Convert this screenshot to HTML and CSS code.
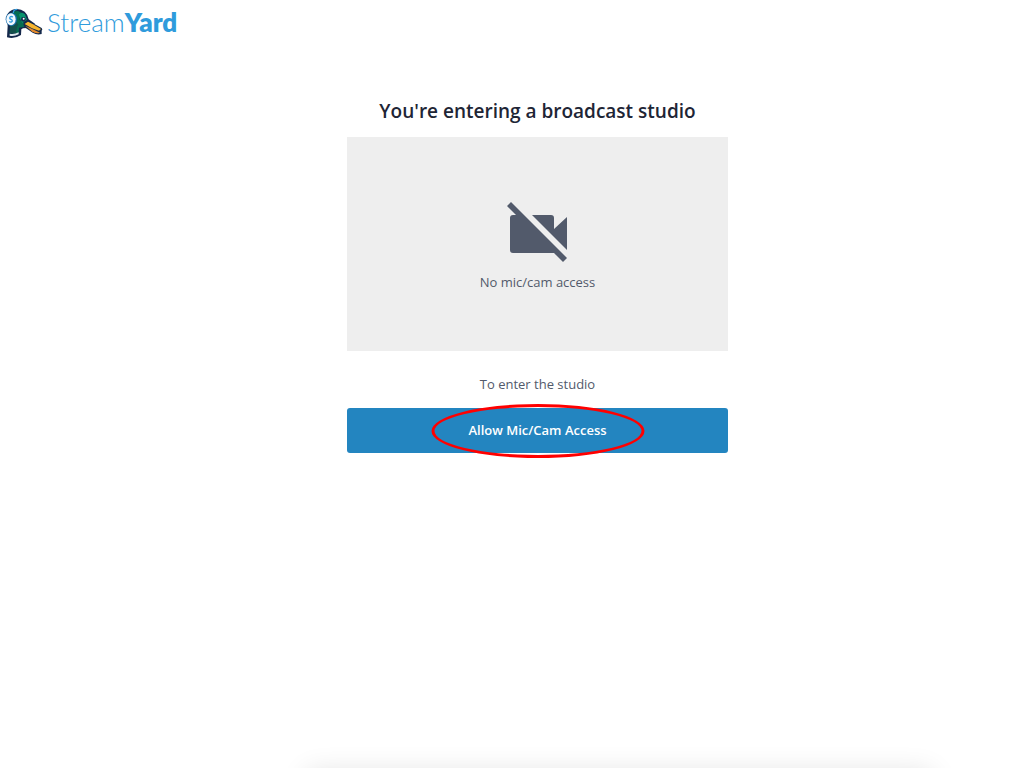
FILE: index.html
```html
<!DOCTYPE html>
<html lang="en">
<head>
    <meta charset="UTF-8">
    <meta name="viewport" content="width=device-width, initial-scale=1.0">
    <title>StreamYard</title>
    <link rel="stylesheet" href="styles.css">
</head>
<body>

<header class="header">
    <a href="#" class="logo">
        <svg class="logo-duck" viewBox="14 23 114 93" aria-hidden="true">
            <!-- head and neck -->
            <path d="M20 111 L22 77 L19 47 Q24 31 44 26 Q61 24 73 34 Q83 43 85 57 L104 70 L83 83 L68 84 L63 87 L62 104 Q43 117 20 111 Z" fill="#14284b"/>
            <path d="M29 76 L47 48 L35 37 Q43 31 53 32 L64 37 Q56 46 58 59 L70 67 L73 79 L56 82 L55 99 L28 99 Z" fill="#056c51"/>
            <path d="M29 77 Q42 80 49 65 L54 73 Q47 82 48 99 L29 99 Z" fill="#14504b"/>
            <path d="M56 42 Q65 32 74 42 L80 58 L66 68 Q57 58 56 42 Z" fill="#08936d"/>
            <!-- collar -->
            <path d="M28 100 Q42 103 55 96 L55 102 Q42 109 28 106 Z" fill="#dfe9ee"/>
            <!-- beak -->
            <path d="M69 72 Q74 65 83 61 L98 69 L124 83 Q128 88 124 91 L124 101 Q110 105 97 97 L72 80 Z" fill="#14284b"/>
            <path d="M73 71 L83 64 L98 72 L122 86 L116 91 L95 84 Z" fill="#f7b52d"/>
            <path d="M75 76 L94 85 L119 97 Q108 102 94 93 Z" fill="#e58b2c"/>
            <!-- eye -->
            <circle cx="69" cy="57" r="7" fill="#14284b"/>
            <circle cx="70" cy="55" r="3" fill="#fff"/>
            <!-- headphone -->
            <path d="M39 38 Q39 27 51 27" fill="none" stroke="#2f9de0" stroke-width="4"/>
            <ellipse cx="33" cy="57" rx="17" ry="20" fill="#176cac"/>
            <ellipse cx="32" cy="57" rx="14" ry="18" fill="#f2f9ff"/>
            <path d="M38 50 Q29 46 28 53 Q29 57 34 58 Q38 63 33 65 Q29 66 27 63" fill="none" stroke="#2f9de0" stroke-width="4"/>
        </svg>
        <span class="logo-text">Stream<b>Yard</b></span>
    </a>
</header>

<main class="studio">
    <div class="entry">
        <h1>You're entering a broadcast studio</h1>

        <!-- Camera preview -->
        <div class="preview">
            <svg class="camera-off" viewBox="0 0 62 60" aria-hidden="true">
                <path d="M4 0 L60 56 L56 60 L47 51 H6 Q3 51 3 48 V16 Q3 13 6 13 H9 L0 4 Z" fill="#525a6b"/>
                <path d="M25 13 H44 Q47 13 47 16 V27 L60 15 V48 Z" fill="#525a6b"/>
            </svg>
            <p>No mic/cam access</p>
        </div>

        <p class="hint">To enter the studio</p>
        <button type="button" class="allow-button">
            Allow Mic/Cam Access
            <span class="highlight"></span>
        </button>
    </div>
</main>

<div class="bottom-panel"></div>

</body>
</html>
```

FILE: styles.css
```css
* {
    box-sizing: border-box;
}
body {
    margin: 0;
    background-color: #fff;
    font-family: "Open Sans", sans-serif;
    font-size: 13px;
    line-height: 20px;
    color: #525a6b;
}
.header {
    padding: 8px 5px;
}
.logo {
    display: inline-flex;
    align-items: flex-start;
    gap: 4px;
    color: #2f9bdc;
    text-decoration: none;
}
.logo-duck {
    width: 38px;
    height: 31px;
}
.logo-text {
    font-family: Lato, sans-serif;
    font-size: 26px;
    font-weight: 300;
    line-height: 28px;
}
.logo-text b {
    font-weight: 800;
}
.studio {
    padding: 44px 0 44px 51px;
}
.entry {
    width: 100%;
    max-width: 381px;
    margin: 0 auto;
    text-align: center;
}
h1 {
    margin: 0 0 11px;
    font-size: 19px;
    font-weight: 600;
    line-height: 30px;
    color: #1e2535;
}
.preview {
    display: flex;
    flex-direction: column;
    align-items: center;
    justify-content: center;
    gap: 10px;
    aspect-ratio: 16 / 9;
    padding-top: 6px;
    background-color: #eee;
}
.preview p {
    margin: 0;
}
.camera-off {
    width: 62px;
    height: 60px;
}
.hint {
    margin: 23px 0 14px;
}
.allow-button {
    position: relative;
    width: 100%;
    padding: 12px;
    border: none;
    border-radius: 3px;
    background-color: #2385c0;
    color: #fff;
    font-family: inherit;
    font-size: 13px;
    font-weight: 600;
    line-height: 21px;
    cursor: pointer;
}
/* ring around the button label */
.highlight {
    position: absolute;
    top: -4px;
    bottom: -5px;
    left: 50%;
    width: 213px;
    transform: translateX(-50%);
    border: 3px solid #f00;
    border-radius: 50%;
}
/* sits just below the window, only its shadow shows */
.bottom-panel {
    position: fixed;
    top: 100%;
    left: 30%;
    right: 9%;
    height: 40px;
    box-shadow: 0 4px 28px rgba(0, 0, 0, 0.12);
}
```
